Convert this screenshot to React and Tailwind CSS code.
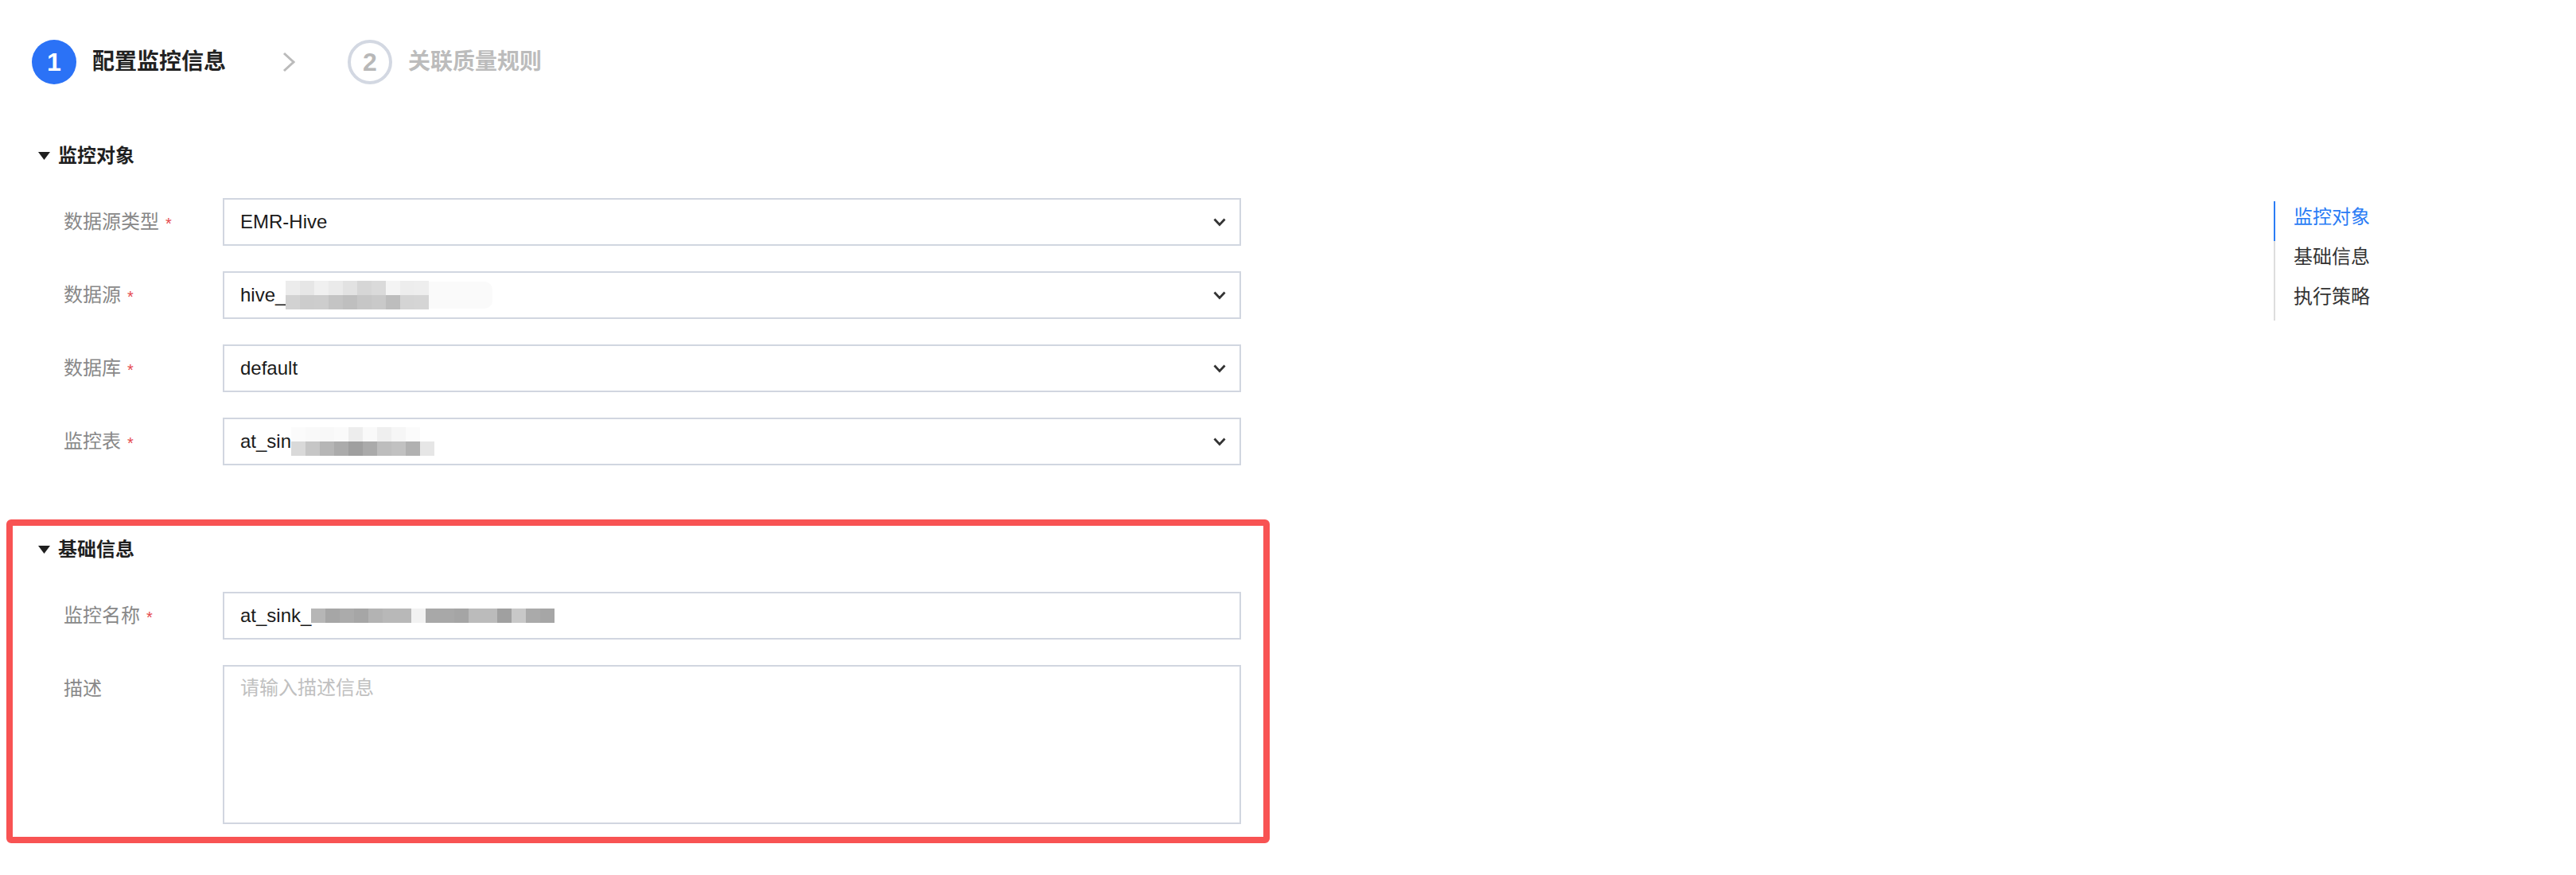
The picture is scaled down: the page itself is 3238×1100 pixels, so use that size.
import React from "react";

const FONT = { fontFamily: "'Liberation Sans', 'Noto Sans CJK SC', sans-serif" };

function Mosaic({ rows, fade = 0 }) {
  return (
    <div className="flex items-center">
      <div className="flex flex-col">
        {rows.map((r, i) => (
          <div key={i} className="flex">
            {r.map((c, j) => (
              <div key={j} className="h-[18px] w-[18px]" style={{ backgroundColor: c }} />
            ))}
          </div>
        ))}
      </div>
      {fade > 0 && <div className="h-[34px] bg-[#fafafa] rounded-r-[10px]" style={{ width: fade }} />}
    </div>
  );
}

function Chevron() {
  return (
    <svg width="16" height="11" viewBox="0 0 16 11" className="shrink-0">
      <polyline points="1.5,1.5 8,8.5 14.5,1.5" fill="none" stroke="#333" strokeWidth="2.8" />
    </svg>
  );
}

function Label({ text, required = true }) {
  return (
    <div className="w-[200px] h-[60px] flex items-center shrink-0">
      <span className="text-[24px] leading-[30px] text-[#888888]">{text}</span>
      {required && (
        <span className="ml-[8px] text-[20px] leading-none text-[#e5484d] translate-y-[2px]">*</span>
      )}
    </div>
  );
}

function SelectRow({ label, children }) {
  return (
    <div className="flex items-start">
      <Label text={label} />
      <div className="w-[1280px] h-[60px] border-2 border-[#d1d6e0] bg-white flex items-center pl-[20px] pr-[17px]">
        <div className="flex-1 flex items-center text-[24px] text-[#1a1a1a] leading-[30px]">{children}</div>
        <Chevron />
      </div>
    </div>
  );
}

function SectionHeader({ text }) {
  return (
    <div className="h-[32px] flex items-center">
      <svg width="15" height="11" viewBox="0 0 15 11" className="mr-[10px]">
        <polygon points="0,0 15,0 7.5,10" fill="#1f1f1f" />
      </svg>
      <span className="text-[24px] leading-[32px] font-bold text-[#1f1f1f]">{text}</span>
    </div>
  );
}

export default function App() {
  const hiveRows = [
    ["#ececec", "#e6e6e6", "#f0f0f0", "#eaeaea", "#e2e2e2", "#d6d6d6", "#dadada", "#f4f4f4", "#ededed", "#eeeeee"],
    ["#d2d2d2", "#cccccc", "#cdcdcd", "#c4c4c4", "#bfbfbf", "#c6c6c6", "#c9c9c9", "#bdbdbd", "#d4d4d4", "#d5d5d5"],
  ];
  const sinRows = [
    ["#fbfbfb", "#f9f9f9", "#f8f8f8", "#fafafa", "#ededed", "#f9f9f9", "#efefef", "#f6f6f6", "#fbfbfb", "#ffffff"],
    ["#d9d9d9", "#c6c6c6", "#b6b6b6", "#ababab", "#9f9f9f", "#aaaaaa", "#bdbdbd", "#c1c1c1", "#b1b1b1", "#e6e6e6"],
  ];
  const sinkRows = [
    ["#b6b6b6", "#a6a6a6", "#ababab", "#a6a6a6", "#b3b3b3", "#b8b8b8", "#b8b8b8", "#f2f2f2", "#a8a8a8", "#a8a8a8", "#a5a5a5", "#bbbbbb", "#bbbbbb", "#a0a0a0", "#c8c8c8", "#aaaaaa", "#a6a6a6"],
  ];

  return (
    <div className="w-[3238px] h-[1100px] bg-white flex" style={FONT}>
      <div className="w-[1604px] shrink-0 flex flex-col">
        {/* Steps */}
        <div className="mt-[50px] pl-[40px] h-[56px] flex items-center">
          <div className="w-[56px] h-[56px] rounded-full bg-[#2b72f6] flex items-center justify-center text-white text-[32px] font-bold">1</div>
          <span className="ml-[20px] text-[28px] font-bold text-[#222222]">配置监控信息</span>
          <svg width="16" height="26" viewBox="0 0 16 26" className="ml-[71px]">
            <polyline points="2,2 14,13 2,24" fill="none" stroke="#bbbbbb" strokeWidth="3" />
          </svg>
          <div className="ml-[66px] w-[56px] h-[56px] rounded-full border-[4px] border-[#d3d8e2] flex items-center justify-center text-[#b8b8b8] text-[32px] font-bold">2</div>
          <span className="ml-[20px] text-[28px] font-bold text-[#bcbcbc]">关联质量规则</span>
        </div>

        {/* Section 1 */}
        <div className="mt-[74px] pl-[48px]">
          <SectionHeader text="监控对象" />
        </div>
        <div className="mt-[37px] pl-[80px] flex flex-col gap-[32px]">
          <SelectRow label="数据源类型">EMR-Hive</SelectRow>
          <SelectRow label="数据源">
            <span>hive_</span>
            <Mosaic rows={hiveRows} fade={80} />
          </SelectRow>
          <SelectRow label="数据库">default</SelectRow>
          <SelectRow label="监控表">
            <span>at_sin</span>
            <Mosaic rows={sinRows} />
          </SelectRow>
        </div>

        {/* Section 2 in red box */}
        <div className="mt-[68px] ml-[8px] w-[1588px] border-[8px] border-[#f85353] rounded-[6px] pt-[14px] pb-[16px] pl-[32px]">
          <SectionHeader text="基础信息" />
          <div className="mt-[37px] pl-[32px] flex flex-col gap-[32px]">
            <div className="flex items-start">
              <Label text="监控名称" />
              <div className="w-[1280px] h-[60px] border-2 border-[#d1d6e0] bg-white flex items-center pl-[20px] text-[24px] text-[#1a1a1a] leading-[30px]">
                <span>at_sink_</span>
                <Mosaic rows={sinkRows} />
              </div>
            </div>
            <div className="flex items-start">
              <Label text="描述" required={false} />
              <textarea
                placeholder="请输入描述信息"
                className="w-[1280px] h-[200px] border-2 border-[#d1d6e0] bg-white resize-none outline-none pl-[20px] pt-[12px] text-[24px] leading-[30px] text-[#1a1a1a] placeholder:text-[#c0c0c0]"
                style={FONT}
              />
            </div>
          </div>
        </div>
      </div>

      <div className="flex-1" />

      {/* Anchor nav */}
      <div className="w-[380px] shrink-0 pt-[253px]">
        <div className="flex border-l-2 border-[#dddddd] relative">
          <div className="absolute left-[-2px] top-0 w-[2px] h-[50px] bg-[#2a7cf5]" />
          <div className="flex flex-col pl-[23px]">
            <div className="h-[50px] pt-[8px] text-[24px] leading-[24px] text-[#2a7cf5]">监控对象</div>
            <div className="h-[50px] pt-[8px] text-[24px] leading-[24px] text-[#333333]">基础信息</div>
            <div className="h-[50px] pt-[8px] text-[24px] leading-[24px] text-[#333333]">执行策略</div>
          </div>
        </div>
      </div>
    </div>
  );
}
